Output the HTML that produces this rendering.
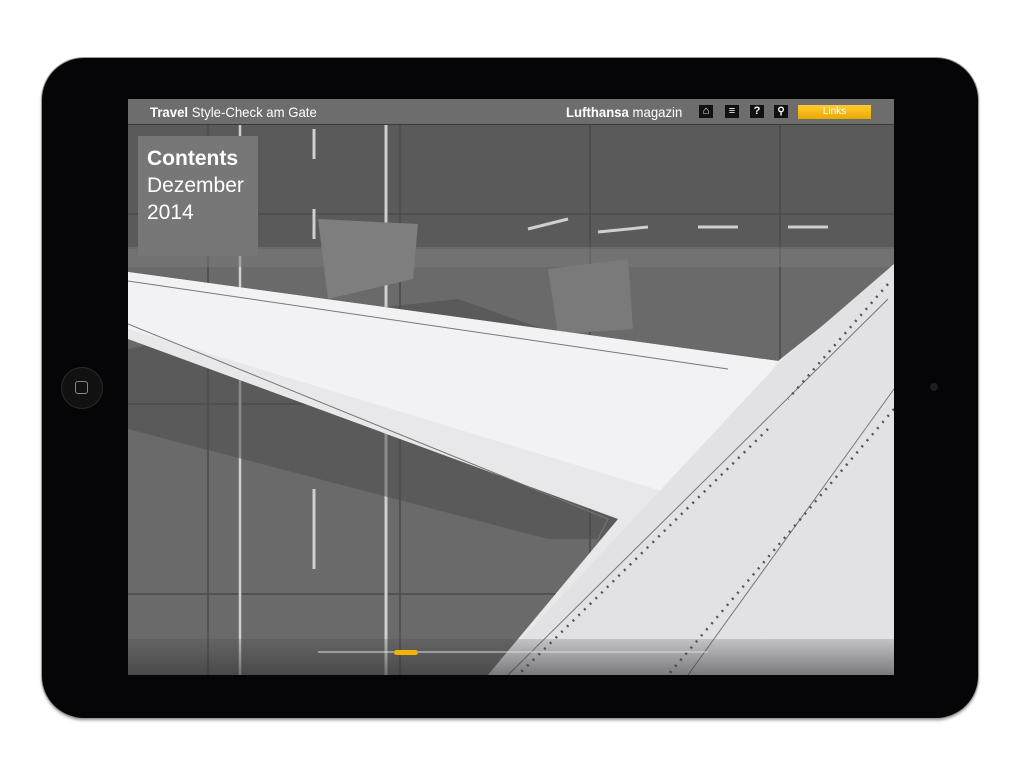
<!DOCTYPE html>
<html><head><meta charset="utf-8"><style>
html,body{margin:0;padding:0;background:#fff;width:1024px;height:763px;overflow:hidden;font-family:"Liberation Sans",sans-serif}
.ipad{position:absolute;left:42px;top:58px;width:936px;height:660px;border-radius:42px;background:#050507;box-shadow:0 0 0 1px #9a9a9a, 0 2px 3px #888}
.screen{position:absolute;left:128px;top:99px;width:766px;height:576px;overflow:hidden;background:#5e5e5e}
.bar{position:absolute;left:0;top:0;width:766px;height:25px;background:#6d6d6d;border-bottom:1px solid #3a3a3a;color:#fff;font-size:14px}
.t{position:absolute;top:5px;transform:scaleX(0.94);transform-origin:left top;white-space:nowrap}
.home{position:absolute;left:61px;top:367px;width:42px;height:42px;border-radius:50%;background:#111;box-shadow:inset 0 0 0 1px #2a2a2a}
.home div{position:absolute;left:14px;top:14px;width:11px;height:11px;border:1.5px solid #888;border-radius:3px}
.cam{position:absolute;left:930px;top:383px;width:8px;height:8px;border-radius:50%;background:#1c1c24}
.ic{position:absolute;top:6px;width:14px;height:13px;background:#111;color:#fff;font-size:11px;font-weight:bold;text-align:center;line-height:13px}
</style></head><body>
<div class="ipad"></div>
<div class="home"><div></div></div>
<div class="cam"></div>
<div class="screen">
<svg width="766" height="576" style="position:absolute;left:0;top:0">
<rect width="766" height="576" fill="#6a6a6a"/>
<rect x="0" y="0" width="766" height="150" fill="#5a5a5a"/>
<g stroke="#4a4a4a" stroke-width="1.5">
<line x1="272" y1="0" x2="272" y2="576"/><line x1="462" y1="0" x2="462" y2="576"/><line x1="652" y1="0" x2="652" y2="576"/><line x1="80" y1="0" x2="80" y2="576"/>
<line x1="0" y1="115" x2="766" y2="115"/><line x1="0" y1="305" x2="766" y2="305"/><line x1="0" y1="495" x2="766" y2="495"/>
</g>
<g stroke="#cfcfcf" stroke-width="3">
<line x1="112" y1="0" x2="112" y2="576" stroke-width="2.5"/>
<line x1="258" y1="0" x2="258" y2="576"/>
<line x1="186" y1="30" x2="186" y2="60"/><line x1="186" y1="110" x2="186" y2="140"/><line x1="186" y1="390" x2="186" y2="470"/>
<line x1="400" y1="130" x2="440" y2="120"/><line x1="470" y1="133" x2="520" y2="128"/><line x1="570" y1="128" x2="610" y2="128"/><line x1="660" y1="128" x2="700" y2="128"/>
</g>
<rect x="0" y="148" width="766" height="20" fill="#7a7a7a" opacity="0.5"/>
<polygon points="0,250 150,220 330,200 500,260 560,440 420,440 0,330" fill="#4a4a4a" opacity="0.5"/>
<polygon points="190,120 290,125 285,180 200,200" fill="#7e7e7e"/>
<polygon points="420,170 500,160 505,230 430,235" fill="#7a7a7a"/>
<polygon points="0,173 650,262 766,170 766,576 360,576 490,420 0,240" fill="#e8e8ea"/>
<polygon points="0,173 650,262 560,400 0,230" fill="#f2f2f4"/>
<polygon points="766,165 766,576 360,576 650,265" fill="#e2e2e6"/>
<g stroke="#777" stroke-width="1" fill="none">
<polyline points="0,182 600,270"/><polyline points="0,225 480,420 470,440"/>
<line x1="760" y1="200" x2="380" y2="576"/><line x1="766" y1="290" x2="560" y2="576"/>
</g>
<g stroke="#555" stroke-width="2.5" stroke-dasharray="2 6">
<line x1="760" y1="185" x2="660" y2="300"/><line x1="766" y1="310" x2="540" y2="576"/><line x1="640" y1="330" x2="390" y2="576"/>
</g>
<defs><linearGradient id="g" x1="0" y1="0" x2="0" y2="1"><stop offset="0" stop-color="#444" stop-opacity="0.2"/><stop offset="1" stop-color="#333" stop-opacity="0.6"/></linearGradient></defs>
<rect x="0" y="540" width="766" height="36" fill="url(#g)"/>
<line x1="190" y1="553" x2="580" y2="553" stroke="#ddd" stroke-width="1"/>
<rect x="266" y="551" width="24" height="5" rx="2.5" fill="#f2b400"/>
</svg>
<div style="position:absolute;left:10px;top:37px;width:120px;height:120px;background:#777;color:#fff">
<div style="position:absolute;left:9px;top:9px;font-size:21px;line-height:27px"><b>Contents</b><br>Dezember<br>2014</div></div>
<div class="bar">
<div class="t" style="left:22px"><b>Travel</b> Style-Check am Gate</div>
<div class="t" style="left:438px"><b>Lufthansa</b> magazin</div>
<div class="ic" style="left:571px">⌂</div>
<div class="ic" style="left:597px">≡</div>
<div class="ic" style="left:622px">?</div>
<div class="ic" style="left:646px;font-size:10px">⚲</div>
<div style="position:absolute;left:670px;top:6px;width:73px;height:14px;background:linear-gradient(#ffcc33,#e8a800);font-size:10px;text-align:center;line-height:14px">Links</div>
</div>
</div>
</body></html>
